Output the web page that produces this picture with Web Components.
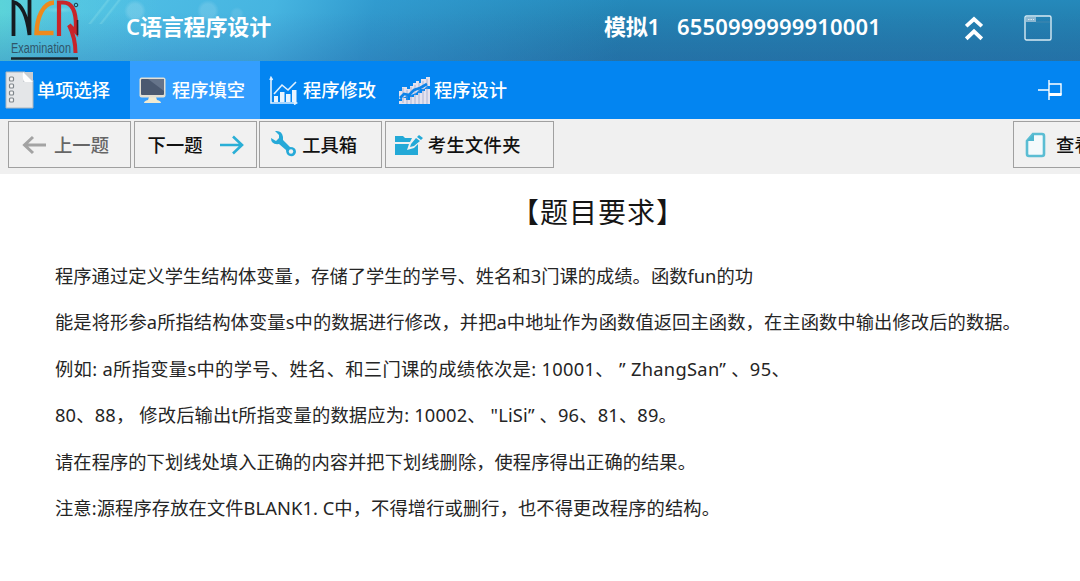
<!DOCTYPE html>
<html lang="zh-CN">
<head>
<meta charset="utf-8">
<title>C语言程序设计</title>
<style>
  body {
    margin: 0;
    width: 1080px;
    height: 581px;
    overflow: hidden;
    background: #fff;
    font-family: "Noto Sans", "Noto Sans CJK SC", sans-serif;
  }
</style>
</head>
<body>
<exam-app></exam-app>

<script>
// icons shared by the header, the tabs and the tool buttons
const icons = {
  logo: `<svg width="74" height="61" viewBox="0 0 74 61" fill="none">
    <path d="M8.5 36V2C17 4 22 16 24.5 35V0" stroke="#161b20" stroke-width="3.8"/>
    <path d="M49 2.5C38 3 32 17 31.5 33H48.5" stroke="#ee8a1c" stroke-width="4.4"/>
    <path d="M54 36V2.5H58C67 2.5 71 12 71 26V32L64 25" stroke="#c9242a" stroke-width="4.2"/>
    <path d="M72.5 20V35" stroke="#3b1a20" stroke-width="1.6"/>
    <path d="M64 25C68 33 70.5 42 70.5 53" stroke="#c9242a" stroke-width="4"/>
    <circle cx="71" cy="5" r="1.8" stroke="#1c3a48" stroke-width="1"/>
    <text x="6" y="53" textLength="60" lengthAdjust="spacingAndGlyphs" font-family="Liberation Sans" font-size="14" font-weight="400" fill="#30566a">Examination</text>
    <path d="M6 58.5H73" stroke="#17252e" stroke-width="2.6"/>
  </svg>`,
  up: `<svg width="18" height="26" viewBox="0 0 18 26" fill="none" stroke="#fff" stroke-width="3.8">
    <path d="M1.2 11.2L9 4L16.8 11.2M1.2 23.8L9 16.4L16.8 23.8"/>
  </svg>`,
  frame: `<svg width="28" height="26" viewBox="0 0 28 26">
    <rect x="1" y="1" width="26" height="24" rx="1.5" fill="none" stroke="#d8eaf3" stroke-width="1.4"/>
    <rect x="2" y="2" width="10" height="5" fill="#8db8d2"/>
    <path d="M4 4.5H10" stroke="#d9e8f0" stroke-dasharray="1.5 1"/>
    <path d="M12 7H26" stroke="#4387ae"/>
  </svg>`,
  choice: `<svg width="29" height="38" viewBox="0 0 29 38">
    <path d="M1 1H20L28 9V37H1Z" fill="#e4e6e8" stroke="#abb5bf"/>
    <path d="M20 1H28V11H18V5Z" fill="#c8cdd1"/>
    <path d="M18 1L28 11H20Q17 10 18 1Z" fill="#fff"/>
    <g fill="#f6f6f6" stroke="#7e858b" stroke-width="1.2">
      <rect x="4.5" y="6" width="4" height="4" rx="1"/><rect x="4.5" y="13" width="4" height="4" rx="1"/>
      <rect x="4.5" y="20" width="4" height="4" rx="1"/><rect x="4.5" y="27" width="4" height="4" rx="1"/>
    </g>
  </svg>`,
  screen: `<svg width="27" height="27" viewBox="0 0 27 27">
    <path d="M10 20H17L18 23Q22 24 22 26H5Q5 24 9 23Z" fill="#f1ead1"/>
    <rect x=".5" y=".5" width="26" height="20" rx="2" fill="#e3dfd3"/>
    <rect x="2" y="2" width="23" height="16" rx="1" fill="#4b5970"/>
    <path d="M9 2H24Q25 2 25 3V14Z" fill="#66748a"/>
  </svg>`,
  chart: `<svg width="29" height="29" viewBox="0 0 29 29">
    <g fill="none" stroke="#e2f1ff" stroke-width="1.6">
      <path d="M2 2V27H27M1 4L2 1.5L3.5 4M25 25.5L27.5 27L25 28.5"/>
      <path d="M5 18L13 9L19 14L27 6"/>
    </g>
    <path d="M5 20H9V26H5ZM11 16H15.5V26H11ZM17 18H21.5V26H17ZM23 14H27.5V26H23Z" fill="#e9f4ff"/>
  </svg>`,
  bars: `<svg width="33" height="29" viewBox="0 0 33 29" fill="#e4e2ee">
    <path d="M1 15H4V11H9V13H12V10H15V7H18V5H21V7H23V3H28V1H32V10H29L26 13H22L18 17L13 19H10L7 21L1 23Z"/>
    <path d="M1 25H4V22H8V24H12V21H16V19H20V17H24V15H27V13H32V28H1Z"/>
    <path d="M5 12V27M9 14V28M13 11V28M17 9V28M21 7V28M25 5V28M29 3V28" stroke="#8498c4" stroke-width=".6"/>
    <path d="M2 22L6 18L11 19L16 14L22 12L29 8" fill="none" stroke="#0d83e9" stroke-width="2.6"/>
  </svg>`,
  pin: `<svg width="24" height="20" viewBox="0 0 24 20" fill="none" stroke="#fff" stroke-width="1.4">
    <path d="M0 10H11M11 0V20M11 4H23V15"/><path d="M11 14.5H23.5" stroke-width="3"/>
  </svg>`,
  back: `<svg width="24" height="20" viewBox="0 0 24 20" fill="none" stroke="#a3a3a3" stroke-width="3">
    <path d="M24 10H2M11 2L2.5 10L11 18"/>
  </svg>`,
  next: `<svg width="24" height="20" viewBox="0 0 24 20" fill="none" stroke="#2aafd6" stroke-width="2.6">
    <path d="M0 10H22M13 1.5L22 10L13 18.5"/>
  </svg>`,
  wrench: `<svg width="27" height="27" viewBox="0 0 27 27">
    <path d="M5 1Q12 0 13 7L13 10L20 17Q26 17 26 22Q25 27 20 26Q16 25 16 20L9 14Q1 15 1 8L6 11L9 8L9 5Z" fill="#25a9d8"/>
    <circle cx="21" cy="21.5" r="2.2" fill="#f0f0f0"/>
  </svg>`,
  folder: `<svg width="30" height="22" viewBox="0 0 30 22" fill="#23a9d7">
    <path d="M1 2H9L11 4H18L16 8H1Z"/>
    <path d="M1 10H15L13 16L20 14L24 10V21H1Z"/>
    <path d="M17 10L22 4L26 7L20 12L16 13ZM23 3L25 1L29 4L27 6Z"/>
  </svg>`,
  page: `<svg width="21" height="26" viewBox="0 0 21 26">
    <path d="M8 2H17Q19 2 19 4V22Q19 24 17 24H4Q2 24 2 22V9Z" fill="#f4fafc" stroke="#5bbdd3" stroke-width="2.6"/>
    <path d="M9 2V9H2Z" fill="#4cb6ce"/>
  </svg>`
};

class ExamIcon extends HTMLElement {
  constructor() {
    super();
    this.attachShadow({ mode: 'open' });
  }

  connectedCallback() {
    this.shadowRoot.innerHTML = `
      <style>
        :host { display: block; flex: none; }
        svg { display: block; }
      </style>
      ${icons[this.getAttribute('name')]}
    `;
  }
}

// One line of text, letter-spaced so that it fills the given width
class FitText extends HTMLElement {
  constructor() {
    super();
    this.attachShadow({ mode: 'open' });
    this.shadowRoot.innerHTML = `
      <style>
        :host { display: block; flex: none; }
        span { display: inline-block; white-space: pre; vertical-align: top; }
      </style>
      <span><slot></slot></span>
    `;
  }

  connectedCallback() {
    const span = this.shadowRoot.querySelector('span');
    const width = Number(this.getAttribute('width'));
    const spacing = (width - span.getBoundingClientRect().width) / this.textContent.length;
    span.style.letterSpacing = `${spacing}px`;
    this.style.width = `${width}px`;
  }
}

class ExamHeader extends HTMLElement {
  constructor() {
    super();
    this.attachShadow({ mode: 'open' });
    this.shadowRoot.innerHTML = `
      <style>
        /* bubbles and light streaks lie over the blue gradient */
        :host {
          display: flex;
          align-items: center;
          box-sizing: border-box;
          height: 61px;
          padding: 0 28px 6px 5px;
          color: #fff;
          font-size: 22px;
          line-height: 30px;
          font-weight: 600;
          background:
            radial-gradient(circle at 135px 11px, #ffffff28 0 7px, transparent 11px),
            radial-gradient(circle at 208px 11px, #ffffff24 0 7px, transparent 11px),
            radial-gradient(circle at 237px 14px, #ffffff18 0 4px, transparent 7px),
            radial-gradient(ellipse 16px 3px at 60px 10px, #d0fff840, transparent),
            linear-gradient(128deg, transparent 46%, #c8fff02c 48% 49%, transparent 52% 60%, #c8fff02c 62% 63%, transparent 66%) 70px 0 / 60px 24px no-repeat,
            linear-gradient(transparent 20%, #2b74b85c),
            linear-gradient(90deg, #5fdcd0a0 0, #5fdcd040 60px, transparent 160px),
            linear-gradient(100deg, #55c4e8 0, #4bbbe6e0 270px, #38a6dca0 370px, transparent 620px),
            linear-gradient(#2589bb, #20709d);
        }
        .logo { align-self: flex-start; margin-right: 47px; height: 55px; }
        fit-text { margin-top: -3px; }
        .kind { margin-left: auto; margin-right: 17px; }
        .up { margin: 0 41px 0 84px; }
      </style>
      <exam-icon class="logo" name="logo"></exam-icon>
      <fit-text width="145">C语言程序设计</fit-text>
      <fit-text class="kind" width="56">模拟1</fit-text>
      <fit-text width="204">6550999999910001</fit-text>
      <exam-icon class="up" name="up"></exam-icon>
      <exam-icon name="frame"></exam-icon>
    `;
  }
}

class ExamTab extends HTMLElement {
  constructor() {
    super();
    this.attachShadow({ mode: 'open' });
    this.shadowRoot.innerHTML = `
      <style>
        :host {
          display: flex;
          align-items: center;
          box-sizing: border-box;
          height: 58px;
          width: 130px;
          color: #fff;
          font-size: 18.3px;
          line-height: 26px;
          font-weight: 500;
        }
        :host([active]) { background: #349efe; }
        .icon { display: flex; box-sizing: border-box; width: var(--icon-box, 42px); padding-left: var(--icon-left, 9px); }
      </style>
      <span class="icon"><slot name="icon"></slot></span>
      <fit-text width="75"></fit-text>
    `;
    this.shadowRoot.querySelector('fit-text').textContent = this.getAttribute('label');
  }
}

class ToolButton extends HTMLElement {
  constructor() {
    super();
    this.attachShadow({ mode: 'open' });
    this.shadowRoot.innerHTML = `
      <style>
        :host {
          display: flex;
          flex: none;
          align-items: center;
          box-sizing: border-box;
          width: 123px;
          height: 47px;
          border: 1.4px solid #a0a0a0;
          background: #f1f1f1;
          color: #111;
          font-size: 18.3px;
          line-height: 26px;
          font-weight: 500;
          white-space: nowrap;
        }
        :host([disabled]) { color: #666; }
      </style>
      <slot></slot>
    `;
  }
}

class ExamQuestion extends HTMLElement {
  constructor() {
    super();
    this.attachShadow({ mode: 'open' });
    this.shadowRoot.innerHTML = `
      <style>
        :host {
          display: flex;
          flex-direction: column;
          height: 407px;
          padding-left: 55px;
          box-sizing: border-box;
          background: #fff;
          color: #252525;
          font-size: 18.3px;
          line-height: 46.4px;
        }
        .title {
          height: 79px;
          padding-left: 456px;
          color: #151515;
          font-size: 28px;
          line-height: 76px;
        }
      </style>
      <div class="title"><slot name="title"></slot></div>
      <slot></slot>
    `;
  }
}

class ExamApp extends HTMLElement {
  constructor() {
    super();
    this.attachShadow({ mode: 'open' });
    this.shadowRoot.innerHTML = `
      <style>
        :host { display: block; }
        nav { display: flex; align-items: center; height: 58px; background: #0385f1; }
        nav .pin { margin-left: auto; margin-right: 18px; }
        .choice { --icon-left: 5px; --icon-box: 37px; }
        .chart { --icon-left: 9px; --icon-box: 43px; }
        .bars { --icon-left: 8px; --icon-box: 44px; }
        .tools {
          display: flex;
          gap: 2.6px;
          box-sizing: border-box;
          height: 55px;
          padding: 2px 0 0 8px;
          overflow: hidden;
          background: #f0f0f0;
        }
        .back { margin: 0 8px 0 13px; }
        .next { margin-left: 17px; }
        .wrench { margin: 0 5px 3px 10px; }
        .folder { margin: 0 4px 0 8px; }
        .files { width: 169px; }
        .view { margin-left: auto; margin-right: -56px; }
        .page { margin: 0 10px 0 11px; }
        .second { padding-left: 13px; }
      </style>
      <exam-header></exam-header>
      <nav>
        <exam-tab class="choice" label="单项选择"><exam-icon slot="icon" name="choice"></exam-icon></exam-tab>
        <exam-tab active label="程序填空"><exam-icon slot="icon" name="screen"></exam-icon></exam-tab>
        <exam-tab class="chart" label="程序修改"><exam-icon slot="icon" name="chart"></exam-icon></exam-tab>
        <exam-tab class="bars" label="程序设计"><exam-icon slot="icon" name="bars"></exam-icon></exam-tab>
        <exam-icon class="pin" name="pin"></exam-icon>
      </nav>
      <div class="tools">
        <tool-button disabled><exam-icon class="back" name="back"></exam-icon><fit-text width="55">上一题</fit-text></tool-button>
        <tool-button><fit-text class="second" width="55">下一题</fit-text><exam-icon class="next" name="next"></exam-icon></tool-button>
        <tool-button><exam-icon class="wrench" name="wrench"></exam-icon><fit-text width="55">工具箱</fit-text></tool-button>
        <tool-button class="files"><exam-icon class="folder" name="folder"></exam-icon><fit-text width="93">考生文件夹</fit-text></tool-button>
        <tool-button class="view"><exam-icon class="page" name="page"></exam-icon><fit-text width="37">查看</fit-text></tool-button>
      </div>
      <exam-question>
        <fit-text slot="title" width="174">【题目要求】</fit-text>
        <fit-text width="698">程序通过定义学生结构体变量，存储了学生的学号、姓名和3门课的成绩。函数fun的功</fit-text>
        <fit-text width="966">能是将形参a所指结构体变量s中的数据进行修改，并把a中地址作为函数值返回主函数，在主函数中输出修改后的数据。</fit-text>
        <fit-text width="735">例如: a所指变量s中的学号、姓名、和三门课的成绩依次是: 10001、 ” ZhangSan” 、95、</fit-text>
        <fit-text width="622">80、88， 修改后输出t所指变量的数据应为: 10002、 "LiSi” 、96、81、89。</fit-text>
        <fit-text width="641">请在程序的下划线处填入正确的内容并把下划线删除，使程序得出正确的结果。</fit-text>
        <fit-text width="665">注意:源程序存放在文件BLANK1. C中，不得增行或删行，也不得更改程序的结构。</fit-text>
      </exam-question>
    `;
  }
}

window.customElements.define('exam-icon', ExamIcon);
window.customElements.define('fit-text', FitText);
window.customElements.define('exam-header', ExamHeader);
window.customElements.define('exam-tab', ExamTab);
window.customElements.define('tool-button', ToolButton);
window.customElements.define('exam-question', ExamQuestion);
window.customElements.define('exam-app', ExamApp);
</script>
</body>
</html>
